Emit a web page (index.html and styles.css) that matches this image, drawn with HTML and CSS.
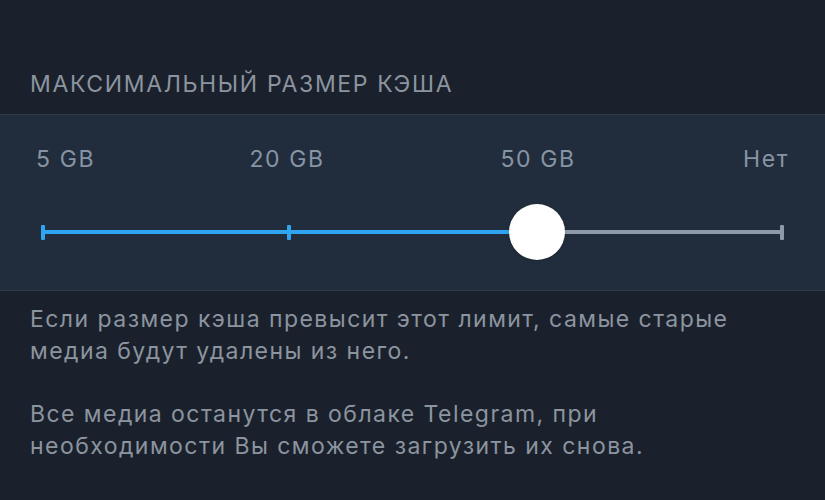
FILE: index.html
```html
<!DOCTYPE html>
<html lang="ru">
<head>
    <meta charset="UTF-8">
    <meta name="viewport" content="width=device-width, initial-scale=1.0">
    <title>Размер кэша</title>
    <link rel="stylesheet" href="styles.css">
</head>
<body>

    <div class="header">МАКСИМАЛЬНЫЙ РАЗМЕР КЭША</div>

    <div class="section">
        <div class="labels">
            <span class="label first">5 GB</span>
            <span class="label">20 GB</span>
            <span class="label">50 GB</span>
            <span class="label last">Нет</span>
        </div>

        <div class="slider">
            <div class="track">
                <span class="tick on"></span>
                <span class="tick on"></span>
                <span class="tick on"></span>
                <span class="tick"></span>
            </div>
            <div class="thumb"></div>
        </div>
    </div>

    <div class="footer">
        <p>Если размер кэша превысит этот лимит, самые старые<br>медиа будут удалены из него.</p>
        <p>Все медиа останутся в облаке Telegram, при<br>необходимости Вы сможете загрузить их снова.</p>
    </div>

</body>
</html>
```

FILE: styles.css
```css
body {
    margin: 0;
    background-color: #1a212c;
    font-family: 'Inter', 'Roboto', sans-serif;
    color: #8c949f;
}

.header {
    padding: 69px 30px 15px;
    font-size: 23px;
    line-height: 30px;
    letter-spacing: 1.65px;
}

.section {
    background-color: #212d3d;
    border-top: 1px solid #2e3a4a;
    border-bottom: 1px solid #2e3a4a;
    padding: 29px 0 30px;
}

.labels {
    display: flex;
    justify-content: space-between;
    margin: 0 43px;
    font-size: 23px;
    line-height: 30px;
    letter-spacing: 1.6px;
    color: #8794a3;
}

.label {
    width: 0;
    display: flex;
    justify-content: center;
    white-space: nowrap;
}

.label.first {
    justify-content: flex-start;
    margin-left: -7px;
}

.label.last {
    justify-content: flex-end;
    margin-right: -7px;
}

.slider {
    position: relative;
    margin: 30px 41px 0;
    height: 56px;
    display: flex;
    align-items: center;
}

.track {
    flex: 1;
    height: 4px;
    background: linear-gradient(to right, #2fa5f1 66.7%, #8d99a8 66.7%);
    display: flex;
    justify-content: space-between;
    align-items: center;
}

.tick {
    width: 4px;
    height: 15px;
    border-radius: 1px;
    background-color: #8d99a8;
}

.tick.on {
    background-color: #2fa5f1;
}

.thumb {
    position: absolute;
    left: 66.7%;
    top: 0;
    width: 56px;
    height: 56px;
    margin-left: -28px;
    border-radius: 50%;
    background-color: #fff;
    box-shadow: 0 1px 3px rgba(0, 0, 0, 0.2);
}

.footer {
    padding: 12px 30px;
}

.footer p {
    margin: 0 0 31px;
    font-size: 23px;
    line-height: 32px;
    letter-spacing: 1.45px;
    color: #8c949f;
}
```
